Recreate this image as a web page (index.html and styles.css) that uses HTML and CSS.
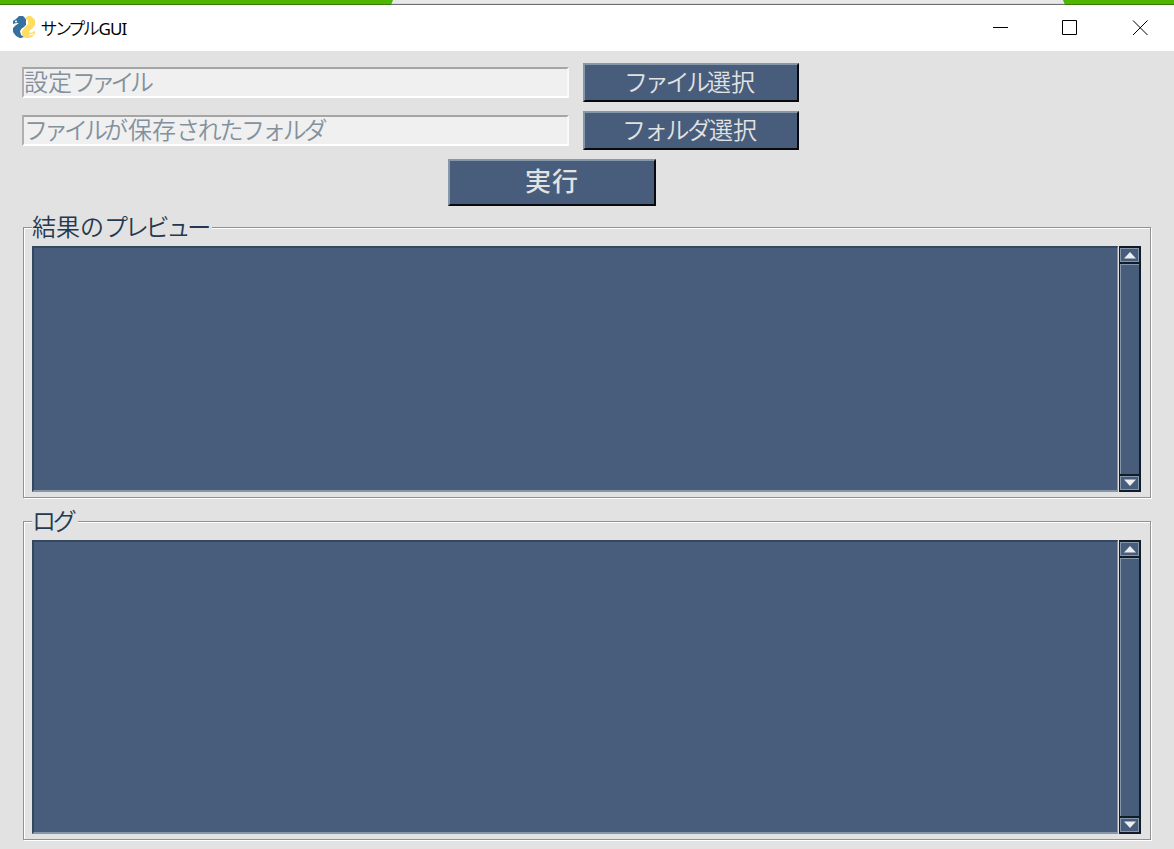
FILE: index.html
```html
<!DOCTYPE html>
<html lang="ja">
<head>
<meta charset="utf-8">
<title>サンプルGUI</title>
<link rel="stylesheet" href="styles.css">
</head>
<body>
<div class="desktop"><div class="behind"></div></div>
<header class="titlebar">
  <svg class="logo" width="24" height="24" viewBox="0 0 24 24">
    <path d="M1 9V6l3-2 3-3h4l3 3v4l-2 4-4 2-1 3 2 4 2 1-3 1-4-2-3-4v-4l3-3 3-2V8z" fill="#34719f"/>
    <path d="M13 3l3-2h3l4 4v5l-3 4-3 2 1 2 5-2v3l-3 3-4 1h-3l-3-3v-4l3-4 3-3V5l-3-1z" fill="#ffdc62"/>
    <path d="M11 2l3 3v5l-4 3-2 3 1 4 3 2-4 1-4-3-1-4 1-4 4-3 3-4z" fill="#34719f"/>
    <circle cx="4" cy="6.500" r="1" fill="#fff"/><circle cx="20" cy="16.500" r="1" fill="#fff"/>
    <path d="M1 9.500l5-1M17 20l5-1" stroke="#fff" fill="none"/>
  </svg>
  <span class="title"><span class="title-kana">サンプル</span>GUI</span>
  <div class="controls">
    <svg width="16" height="16" viewBox="0 0 16 16"><path d="M1 7.500h15"/></svg>
    <svg width="16" height="16" viewBox="0 0 16 16"><path d="M.5.5h14v14H.5z"/></svg>
    <svg width="16" height="16" viewBox="0 0 16 16"><path d="M1 .5l14.500 14.500M15.500.5L1 15"/></svg>
  </div>
</header>
<main class="content">
  <div class="row">
    <div class="field"><span class="t">設定<span class="kana kana-tight">ファイル</span></span></div>
    <div class="button"><span class="t"><span class="kana kana-wide">ファイル</span>選択</span></div>
  </div>
  <div class="row">
    <div class="field"><span class="t"><span class="kana">ファイル</span>が保存<span class="hira">された</span><span class="kana kana-wide">フォルダ</span></span></div>
    <div class="button"><span class="t"><span class="kana kana-loose">フォルダ</span>選択</span></div>
  </div>
  <div class="button run"><span class="t">実行</span></div>
  <section class="group preview">
    <h2 class="t">結果の<span class="kana kana-wide">プレビュー</span></h2>
    <div class="output">
      <div class="area"></div>
      <div class="scrollbar"><div class="arrow"><svg width="14" height="8" viewBox="0 0 14 8"><path d="M1 7.500L7 1l6 6.500z"/></svg></div><div class="thumb"></div><div class="arrow"><svg width="14" height="8" viewBox="0 0 14 8"><path d="M1 .5h12L7 7z"/></svg></div></div>
    </div>
  </section>
  <section class="group log">
    <h2 class="t"><span class="kana kana-wide">ログ</span></h2>
    <div class="output">
      <div class="area"></div>
      <div class="scrollbar"><div class="arrow"><svg width="14" height="8" viewBox="0 0 14 8"><path d="M1 7.500L7 1l6 6.500z"/></svg></div><div class="thumb"></div><div class="arrow"><svg width="14" height="8" viewBox="0 0 14 8"><path d="M1 .5h12L7 7z"/></svg></div></div>
    </div>
  </section>
</main>
</body>
</html>
```
FILE: styles.css
```css
* { box-sizing: border-box; }
body { margin: 0; width: 1174px; height: 849px; overflow: hidden; background: #e2e2e2; font-family: "Noto Sans CJK JP", sans-serif; }
.desktop { height: 5px; background: #4eb500; border-bottom: 1px solid #397b08; }
.behind { width: 674px; height: 5px; margin-left: 391px; background: linear-gradient(#e8e8e8 0 50%, #d5d5d5 79%, #6d6d6d 80%); clip-path: polygon(2px 0, 672px 0, 674px 5px, 0 5px); }
.titlebar { height: 46px; background: #fff; display: flex; align-items: center; padding-left: 12px; }
.logo { display: block; margin-bottom: 2px; }
.title { font: 17px/24px "Noto Sans", "Noto Sans CJK JP", sans-serif; color: #000; margin: 1px 0 0 5px; white-space: nowrap; letter-spacing: -.8px; }
.title-kana { font-family: "Noto Sans CJK JP", sans-serif; font-weight: 350; font-feature-settings: "palt"; letter-spacing: -1.2px; }
.controls { margin-left: auto; display: flex; gap: 54px; padding-right: 26px; margin-bottom: 1px; }
.controls svg { fill: none; stroke: #000; stroke-width: 1; }
.content { padding: 12px 23px 0 22px; }
.row { display: flex; align-items: center; gap: 14px; height: 39px; margin-bottom: 9px; }
.t { font-size: 24px; line-height: 30px; font-weight: 350; white-space: nowrap; }
.kana { letter-spacing: -4px; }
.kana-tight { letter-spacing: -4.7px; }
.kana-wide { letter-spacing: -3.2px; }
.kana-loose { letter-spacing: -2.3px; }
.hira { letter-spacing: -2.3px; }
.field { width: 547px; height: 31px; background: #f0f0f0; border: 2px solid; border-color: #a5a5a5 #f9f9f9 #fff #b0b0b0; color: #83919e; display: flex; align-items: center; padding-bottom: 3px; }
.button { width: 216px; height: 39px; background: #475d7b; border: 2px solid; border-color: #8797aa #080a0d #080a0d #8797aa; color: #e2e2e2; display: flex; align-items: center; justify-content: center; padding: 0 3px 4px 0; }
.run { width: 208px; height: 47px; margin-left: 426px; padding: 0 0 5px; }
.run .t { font-weight: 500; font-size: 26px; letter-spacing: 1px; }
.group { margin-left: 1px; border: 1px solid #929292; box-shadow: 1px 1px #fff, inset 1px 1px #fff; display: flex; flex-direction: column; padding: 0 9px 5px 8px; }
.preview { height: 271px; margin-top: 21px; }
.log { height: 319px; margin-top: 23px; }
.group h2 { margin: -17px 0 5px; padding: 0 4px 0 0; color: #243950; background: #e2e2e2; align-self: flex-start; }
.output { flex: 1; display: flex; }
.area { flex: 1; background: #475d7b; border: 1px solid; border-width: 2px 1px 2px 2px; border-color: #35475e #8797aa #8797aa #35475e; margin-right: 1px; }
.scrollbar { width: 22px; border: 2px solid #111c29; border-width: 2px 2px 2px 1px; background: #475d7b; display: flex; flex-direction: column; }
.arrow { height: 14px; border: 1px solid #8797aa; display: flex; justify-content: center; align-items: center; }
.arrow svg { fill: #eee; }
.thumb { flex: 1; border: solid #111c29; border-width: 2px 0; position: relative; box-shadow: inset 1px 1px #8797aa; }
```
